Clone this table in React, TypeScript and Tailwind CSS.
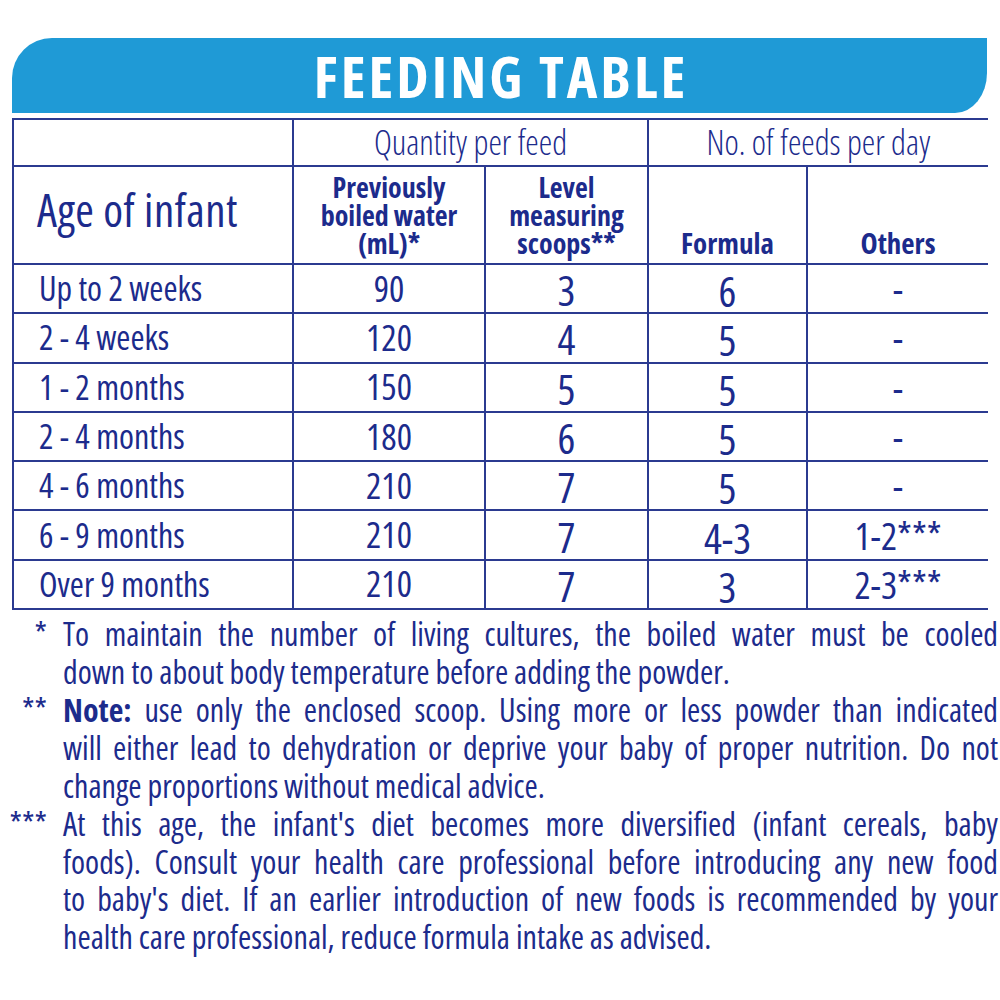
const rows = [
  { age: "Up to 2 weeks", water: "90", scoops: "3", formula: "6", others: "-" },
  { age: "2 - 4 weeks", water: "120", scoops: "4", formula: "5", others: "-" },
  { age: "1 - 2 months", water: "150", scoops: "5", formula: "5", others: "-" },
  { age: "2 - 4 months", water: "180", scoops: "6", formula: "5", others: "-" },
  { age: "4 - 6 months", water: "210", scoops: "7", formula: "5", others: "-" },
  { age: "6 - 9 months", water: "210", scoops: "7", formula: "4-3", others: "1-2***" },
  { age: "Over 9 months", water: "210", scoops: "7", formula: "3", others: "2-3***" },
];

const font = "font-['Open_Sans',sans-serif]";

function Line({ children, last }: { children: React.ReactNode; last?: boolean }) {
  return (
    <div
      className={
        last
          ? "whitespace-nowrap"
          : "whitespace-nowrap text-justify [text-align-last:justify]"
      }
    >
      {children}
    </div>
  );
}

export default function App() {
  return (
    <div className={`w-[1000px] h-[1000px] bg-white text-[#1c2b8c] ${font} pt-[38px]`}>
      {/* Title banner */}
      <div className="ml-[12px] w-[975px] h-[75px] bg-[#1f9ad6] rounded-tl-[40px] rounded-br-[32px_40px] flex items-center justify-center">
        <h1 className="text-white text-[58px] leading-[58px] font-bold [font-stretch:87.5%] tracking-[3px] pl-[3px]">
          FEEDING TABLE
        </h1>
      </div>

      {/* Table */}
      <div className="mt-[5px] ml-[12px] w-[976px] bg-[#2b3a90] p-[2px] grid grid-cols-[278px_190px_161px_157px_180px] grid-rows-[45px_96px_repeat(7,47.3px)] gap-[2px]">
        <div className="bg-white" />
        <div className="col-span-2 bg-white flex items-center justify-center text-[34px] font-light [font-stretch:75%]">
          Quantity per feed
        </div>
        <div className="col-span-2 bg-white flex items-center justify-center text-[34px] font-light [font-stretch:75%]">
          No. of feeds per day
        </div>

        <div className="bg-white flex items-center pl-[23px] pb-[10px] text-[45px] [font-stretch:87.5%] tracking-[0.5px]">
          Age of infant
        </div>
        <div className="bg-white flex flex-col items-center justify-end pb-[6px] text-[28px] leading-[28px] font-bold [font-stretch:75%] text-center">
          <span>Previously</span>
          <span>boiled water</span>
          <span>(mL)*</span>
        </div>
        <div className="bg-white flex flex-col items-center justify-end pb-[6px] text-[28px] leading-[28px] font-bold [font-stretch:75%] text-center">
          <span>Level</span>
          <span>measuring</span>
          <span>scoops**</span>
        </div>
        <div className="bg-white flex items-end justify-center pb-[6px] text-[29px] leading-[28px] font-bold [font-stretch:75%]">
          Formula
        </div>
        <div className="bg-white flex items-end justify-center pb-[6px] text-[29px] leading-[28px] font-bold [font-stretch:75%]">
          Others
        </div>

        {rows.map((r) => (
          <>
            <div key={r.age + "a"} className="bg-white flex items-center pl-[25px] text-[34px] [font-stretch:75%] whitespace-nowrap">
              {r.age}
            </div>
            <div key={r.age + "b"} className="bg-white flex items-center justify-center text-[36px] [font-stretch:87.5%]">
              {r.water}
            </div>
            <div key={r.age + "c"} className="bg-white flex items-center justify-center pt-[2px] text-[42px] [font-stretch:87.5%]">
              {r.scoops}
            </div>
            <div key={r.age + "d"} className="bg-white flex items-center justify-center pt-[4px] text-[42px] [font-stretch:87.5%]">
              {r.formula}
            </div>
            <div key={r.age + "e"} className="bg-white flex items-center justify-center text-[38px] [font-stretch:87.5%]">
              {r.others}
            </div>
          </>
        ))}
      </div>

      {/* Footnotes */}
      <div className="mt-[5px] grid grid-cols-[47px_935px] gap-x-[16px] text-[32px] leading-[37.9px] [font-stretch:75%]">
        <div className="text-right">*</div>
        <div>
          <Line>To maintain the number of living cultures, the boiled water must be cooled</Line>
          <Line last>down to about body temperature before adding the powder.</Line>
        </div>
        <div className="text-right">**</div>
        <div>
          <Line>
            <span className="font-bold">Note:</span> use only the enclosed scoop. Using more or less powder than indicated
          </Line>
          <Line>will either lead to dehydration or deprive your baby of proper nutrition. Do not</Line>
          <Line last>change proportions without medical advice.</Line>
        </div>
        <div className="text-right">***</div>
        <div>
          <Line>At this age, the infant's diet becomes more diversified (infant cereals, baby</Line>
          <Line>foods). Consult your health care professional before introducing any new food</Line>
          <Line>to baby's diet. If an earlier introduction of new foods is recommended by your</Line>
          <Line last>health care professional, reduce formula intake as advised.</Line>
        </div>
      </div>
    </div>
  );
}
